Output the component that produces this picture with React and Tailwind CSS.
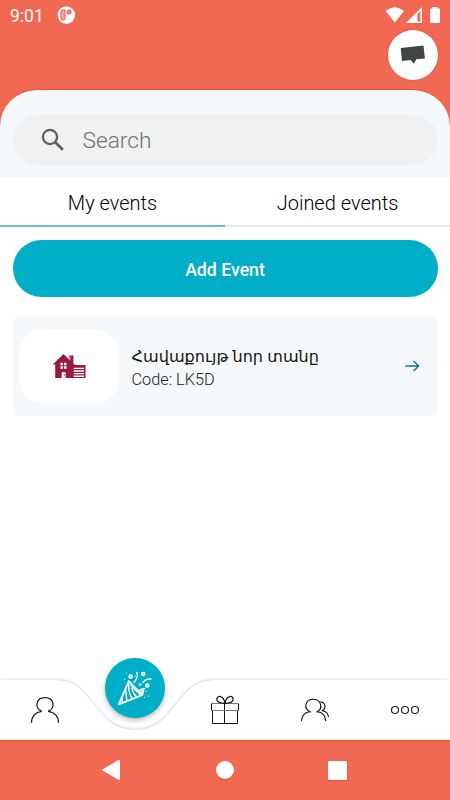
import React from "react";

function StatusBar() {
  return (
    <div className="flex h-[30px] items-center justify-between pl-[10px] pr-[9px] text-white">
      <div className="flex items-center gap-[14px]">
        <span className="w-[33px] whitespace-nowrap pt-[2px] text-[17.5px] leading-[30px]">9:01</span>
        <svg width="18" height="18" viewBox="0 0 18 18">
          <circle cx="9.3" cy="9" r="8.7" fill="white" />
          <path d="M8 4H5.5Q4 4 4 6V12Q4 14 6 14T8 12Z" fill="#f7a393" stroke="#f16853" strokeWidth="1.1" />
          <circle cx="12" cy="6" r="1.9" fill="#f4806d" stroke="#f16853" strokeWidth="1.2" />
        </svg>
      </div>
      <svg width="56" height="18" viewBox="0 0 56 18" fill="white">
        <path d="M.6 4.9Q9.8-2.3 19 4.9L9.8 16.5Z" />
        <path fillRule="evenodd" d="M37 1V17H21ZM35.4 5.2L32.4 8.2V15.5H35.4Z" />
        <path d="M47.5 1H52.5V2.6H55V15.5Q55 17 53.5 17H46.7Q45.2 17 45.2 15.5V2.6H47.5Z" />
      </svg>
    </div>
  );
}

function Header() {
  return (
    <header className="bg-[#f16853]">
      <StatusBar />
      <div className="flex h-[59px] justify-end pr-[12.5px]">
        <button className="flex h-[50px] w-[50px] items-center justify-center rounded-full bg-white shadow-[0_0_2px_rgba(0,0,0,0.2)]">
          <svg width="26" height="20" viewBox="0 0 26 20">
            <path d="M.7 3L23.5.4L24.9 13.5L16.4 14.2L13.8 18.8L10.6 14.9L2 15.9Z" fill="#424545" />
          </svg>
        </button>
      </div>
      <div className="h-[88px] rounded-t-[37px] border-t border-[#f04b2c] bg-[#f5f9fc] px-[12.5px] pt-[25px]">
        <div className="flex h-[50px] items-center rounded-full bg-[#f0f1f3] pl-[28px]">
          <svg width="24" height="24" viewBox="0 0 24 24" fill="none" stroke="#5f6062" strokeWidth="2.3">
            <circle cx="9" cy="9" r="7.1" />
            <path d="M14 14L21.8 21.8" strokeWidth="2.8" />
          </svg>
          <span className="ml-[18px] pt-[1px] text-[22.7px] font-light leading-[48px] text-[#727375]">Search</span>
        </div>
      </div>
    </header>
  );
}

function Tabs() {
  return (
    <div className="grid h-[50px] grid-cols-2 text-center text-[20px] font-light leading-[43px] text-black">
      <div className="border-b-2 border-[#6bbdcd] pt-[5px]">My events</div>
      <div className="border-b-2 border-[#e8e8e8] pt-[5px]">Joined events</div>
    </div>
  );
}

function EventCard() {
  return (
    <div className="mt-[19px] flex h-[100px] items-center rounded-[6px] bg-[#f5f9fc] pl-[6.5px] pr-[18px]">
      <div className="flex h-[75px] w-[100px] items-center justify-center rounded-[25px] bg-white">
        <svg width="33" height="26" viewBox="0 0 33 26">
          <path d="M0 11.2L10.5 1L15.9 6.2V2.4H20.4V10.5L22 12H32.5V25H2.2V11.6H.6Z" fill="#971b3d" />
          <path d="M16.9 3.3V7.2" stroke="white" strokeWidth=".8" />
          <path d="M7.5 9.8H10V12.3H7.5ZM11 9.8H13.5V12.3H11ZM7.5 13.3H10V15.8H7.5ZM11 13.3H13.5V15.8H11ZM8.7 19.2H12.6V25H8.7Z" fill="white" />
          <circle cx="11.3" cy="22" r=".7" fill="#971b3d" />
          <path d="M20.7 15.4H31M20.7 18H31M20.7 20.6H31M20.7 23.2H31" stroke="white" strokeWidth="1.4" />
        </svg>
      </div>
      <div className="ml-[12.5px] mt-[3px] flex-1 whitespace-nowrap">
        <div className="font-['Noto_Sans','Open_Sans','DejaVu_Sans',sans-serif] text-[16.1px] leading-[24px] text-[#15120f]">Հավաքույթ նոր տանը</div>
        <div className="text-[16.3px] font-light leading-[23px] text-[#222]">Code: LK5D</div>
      </div>
      <svg width="15" height="14" viewBox="0 0 15 14" fill="none" stroke="#087087" strokeWidth="1.3">
        <path d="M.5 7H13.3M8.6 2L13.6 7L8.6 12" />
      </svg>
    </div>
  );
}

function PartyIcon() {
  return (
    <svg width="38" height="38" viewBox="0 0 38 38" fill="none" stroke="white" strokeWidth="1.4" strokeLinecap="round" strokeLinejoin="round">
      <path d="M12.8 12.2L2.7 35.4L26.4 26Z" strokeWidth="1.7" />
      <path d="M12.8 12.2Q17 21 26.4 26M9.6 20L10.8 31.5M12.6 15.5Q12.5 25 16.5 29.8M16 19.5Q17 25 21 28M6.4 28L6 33.5M23 25L27.8 20.6L26.4 26" />
      <path d="M18.2 13.3Q22.4 8.4 21 3.5M26.7 13.6Q29.6 9.4 35 10M22.5 22.5Q25 19.5 28.8 19.6" />
      <g strokeWidth="1.8">
        <circle cx="14.6" cy="7.5" r="1.4" />
        <circle cx="27.3" cy="5" r="1.4" />
        <circle cx="31.3" cy="16.5" r="1.4" />
      </g>
      <circle cx="24" cy="15.5" r="1.1" strokeWidth=".7" />
      <path d="M8.6 10.2h.1M10.4 4.2h.1M19.3 7.2h.1M30.1 22.2h.1M28.5 28.4h.1M32.6 27.1h.1" strokeWidth="1.2" opacity=".8" />
    </svg>
  );
}

function BottomNav() {
  return (
    <nav className="relative h-[60px]">
      <svg className="absolute inset-x-0 -top-[10px] overflow-visible" width="450" height="70" viewBox="0 670 450 70">
        <path d="M0 680H58C76 680 83 691 96 706C105 718 115 729.5 135 729.5C155 729.5 165 718 174 706C187 691 194 680 212 680H450V740H0Z" fill="white" style={{ filter: "drop-shadow(0 -1px 1.5px rgba(0,0,0,.09))" }} />
        <path d="M58 680C76 680 83 691 96 706C105 718 115 729.5 135 729.5C155 729.5 165 718 174 706C187 691 194 680 212 680" fill="none" stroke="#cfcfcf" strokeWidth=".6" />
      </svg>
      <div className="relative grid h-full grid-cols-5 place-items-center">
        <svg width="30" height="28" viewBox="0 0 30 28" fill="none" stroke="#111" strokeWidth="1.2">
          <path d="M1.5 26.7C1.5 20.5 5.5 16 11.8 15.3C4.5 12.5 5.5 1.7 15 1.7S25.5 12.5 18.2 15.3C24.5 16 28.5 20.5 28.5 26.7" />
        </svg>
        <button className="-mt-[45px] flex h-[60px] w-[60px] items-center justify-center rounded-full bg-[#00aec7] shadow-[0_2px_5px_rgba(0,0,0,0.3)]">
          <PartyIcon />
        </button>
        <svg width="30" height="30" viewBox="0 0 30 30" fill="none" stroke="#111" strokeWidth="1">
          <path d="M1.5 8.5V15.5M28.5 8.5V15.5M2.5 15.5V28.5H27.5V15.5M14.5 8.5V28.5" />
          <path d="M1.5 8.5H28.5M1.5 15.5H28.5" stroke="#777" />
          <path d="M15 8.3C10.5 8.3 6.8 6.8 6.8 4C7.5 0 13.5.2 15 8.3ZM15 8.3C19.5 8.3 23.2 6.8 23.2 4C22.5 0 16.5.2 15 8.3Z" strokeWidth="1.2" />
        </svg>
        <svg width="30" height="28" viewBox="0 0 30 28" fill="none" stroke="#111" strokeWidth="1.1">
          <path d="M1.4 25C2 19.5 5 16.2 10 15.8C3 12 5.5 3.2 13.2 3.2S23.5 12 17.2 15.8C22 16.2 25.2 19.5 25.8 25" />
          <path d="M20.4 5.9C26 6.7 26.3 12.5 22.4 14.8C25.8 15.3 28.1 18 28.5 21" />
        </svg>
        <svg width="30" height="12" viewBox="0 0 30 12" fill="none" stroke="#222" strokeWidth="1.2">
          <circle cx="5" cy="6" r="3.5" />
          <circle cx="15" cy="6" r="3.5" />
          <circle cx="25" cy="6" r="3.5" />
        </svg>
      </div>
    </nav>
  );
}

function SystemNav() {
  return (
    <div className="flex h-[60px] items-center justify-between border-t border-[#f04b2c] bg-[#f16853] pb-[1px] pl-[101px] pr-[103px]">
      <svg width="20" height="22" viewBox="0 0 20 22" fill="white">
        <path d="M1.7 10.2L17.5 1Q19 .3 19 2V20Q19 21.7 17.5 20.8L1.7 11.8Q.7 11 1.7 10.2Z" />
      </svg>
      <div className="h-[18px] w-[18px] rounded-full bg-white shadow-[0_1px_1px_rgba(130,40,20,0.3)]" />
      <div className="h-[19px] w-[19px] rounded-[1.5px] bg-white shadow-[0_1px_1px_rgba(130,40,20,0.3)]" />
    </div>
  );
}

export default function App() {
  return (
    <div className="flex h-[800px] w-[450px] flex-col overflow-hidden bg-white font-['Roboto',sans-serif]">
      <Header />
      <Tabs />
      <main className="flex-1 px-[12.5px] pt-[13px]">
        <button className="block h-[57px] w-full rounded-full bg-[#00aec7] pt-[3px] text-[17.7px] font-medium text-white">Add Event</button>
        <EventCard />
      </main>
      <BottomNav />
      <SystemNav />
    </div>
  );
}
